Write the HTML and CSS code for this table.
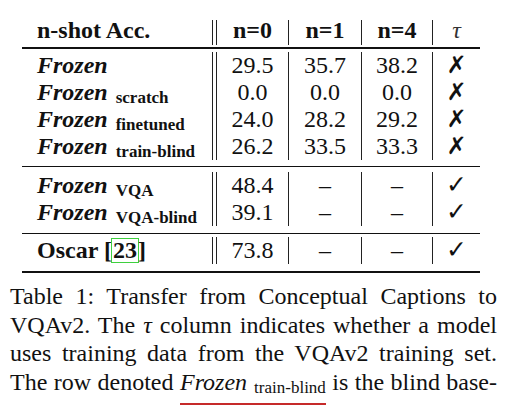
FILE: index.html
```html
<!DOCTYPE html>
<html lang="en">
<head>
  <meta charset="UTF-8" />
  <meta name="viewport" content="width=device-width, initial-scale=1.0"/>
  <title>Table 1: Transfer to VQAv2</title>
  <link rel="stylesheet" href="styles.css">
</head>
<body>
  <div class="page">
    <div class="results">
      <div class="head name">n-shot Acc.</div>
      <div class="head sep"></div>
      <div class="head num">n=0</div>
      <div class="head num bar">n=1</div>
      <div class="head num bar">n=4</div>
      <div class="head num bar tau">&tau;</div>
      <div class="rule rule-head"></div>

      <div class="name"><em>Frozen</em></div>
      <div class="sep"></div>
      <div class="num">29.5</div>
      <div class="num bar">35.7</div>
      <div class="num bar">38.2</div>
      <div class="num bar"><span class="no">&#x2717;</span></div>

      <div class="name"><em>Frozen</em><span class="sub">scratch</span></div>
      <div class="sep"></div>
      <div class="num">0.0</div>
      <div class="num bar">0.0</div>
      <div class="num bar">0.0</div>
      <div class="num bar"><span class="no">&#x2717;</span></div>

      <div class="name"><em>Frozen</em><span class="sub">finetuned</span></div>
      <div class="sep"></div>
      <div class="num">24.0</div>
      <div class="num bar">28.2</div>
      <div class="num bar">29.2</div>
      <div class="num bar"><span class="no">&#x2717;</span></div>

      <div class="name"><em>Frozen</em><span class="sub">train-blind</span></div>
      <div class="sep"></div>
      <div class="num">26.2</div>
      <div class="num bar">33.5</div>
      <div class="num bar">33.3</div>
      <div class="num bar"><span class="no">&#x2717;</span></div>
      <div class="rule rule-mid"></div>

      <div class="name"><em>Frozen</em><span class="sub">VQA</span></div>
      <div class="sep"></div>
      <div class="num">48.4</div>
      <div class="num bar">&ndash;</div>
      <div class="num bar">&ndash;</div>
      <div class="num bar"><span class="yes">&#x2713;</span></div>

      <div class="name"><em>Frozen</em><span class="sub">VQA-blind</span></div>
      <div class="sep"></div>
      <div class="num">39.1</div>
      <div class="num bar">&ndash;</div>
      <div class="num bar">&ndash;</div>
      <div class="num bar"><span class="yes">&#x2713;</span></div>
      <div class="rule rule-mid rule-last"></div>

      <div class="name">Oscar [<span class="cite">23</span>]</div>
      <div class="sep"></div>
      <div class="num">73.8</div>
      <div class="num bar">&ndash;</div>
      <div class="num bar">&ndash;</div>
      <div class="num bar"><span class="yes">&#x2713;</span></div>
      <div class="rule rule-bottom"></div>
    </div>

    <p class="caption">Table 1: Transfer from Conceptual Captions to<br>
      VQAv2. The <i>&tau;</i> column indicates whether a model<br>
      uses training data from the VQAv2 training set.<br>
      The row denoted <span class="marked"><i>Frozen</i><span class="cap-sub">train-blind</span></span> is the blind base-</p>
  </div>
</body>
</html>
```

FILE: styles.css
```css
body {
  margin: 0;
  background: #fff;
  color: #111;
  font-family: "Liberation Serif", "Times New Roman", serif;
}

.page {
  padding: 20px 10px 0;
}

/* table: name | double bar | n=0 | n=1 | n=4 | tau */
.results {
  display: grid;
  grid-template-columns: 190px 5px 71px 73px 71px 48px;
  margin-left: 12px;
  font-size: 24px;
  line-height: 27px;
}

.results > div {
  white-space: nowrap;
}

.name {
  padding-left: 15px;
  font-weight: bold;
}

.sub {
  font-size: 17px;
  line-height: 10px;
  margin-left: 8px;
  vertical-align: -3px;
}

.cite {
  display: inline-block;
  line-height: 23px;
  padding: 0 1px;
  outline: 1.5px solid #3fd03f;
}

.sep {
  border-left: 1px solid #222;
  border-right: 1px solid #222;
}

.num {
  text-align: center;
}

.bar {
  border-left: 1px solid #222;
}

.head {
  line-height: 20px;
  padding-bottom: 5px;
  font-weight: bold;
}

.head.tau {
  font-weight: normal;
  font-style: italic;
  color: #333;
}

.no,
.yes {
  font-family: "DejaVu Sans", sans-serif;
  line-height: 20px;
}

.no {
  font-size: 24px;
  font-weight: bold;
}

.yes {
  font-size: 25px;
}

.rule {
  grid-column: 1 / -1;
  border-top: 1.5px solid #111;
}

.rule-head {
  margin-top: 2px;
  border-top-width: 2px;
  height: 3px;
}

.rule-mid {
  margin-top: 6px;
  height: 4.5px;
}

.rule-last {
  margin-top: 7px;
  height: 3.5px;
}

.rule-bottom {
  margin-top: 7px;
  border-top-width: 2px;
}

.caption {
  margin: 9px 0 0;
  font-size: 24px;
  line-height: 28.5px;
  text-align: justify;
  text-align-last: justify;
}

.marked {
  display: inline-block;
  border-bottom: 2px solid #c62a2a;
  padding-bottom: 7px;
}

.cap-sub {
  font-size: 17px;
  line-height: 10px;
  margin-left: 7px;
  vertical-align: -3px;
}
```
